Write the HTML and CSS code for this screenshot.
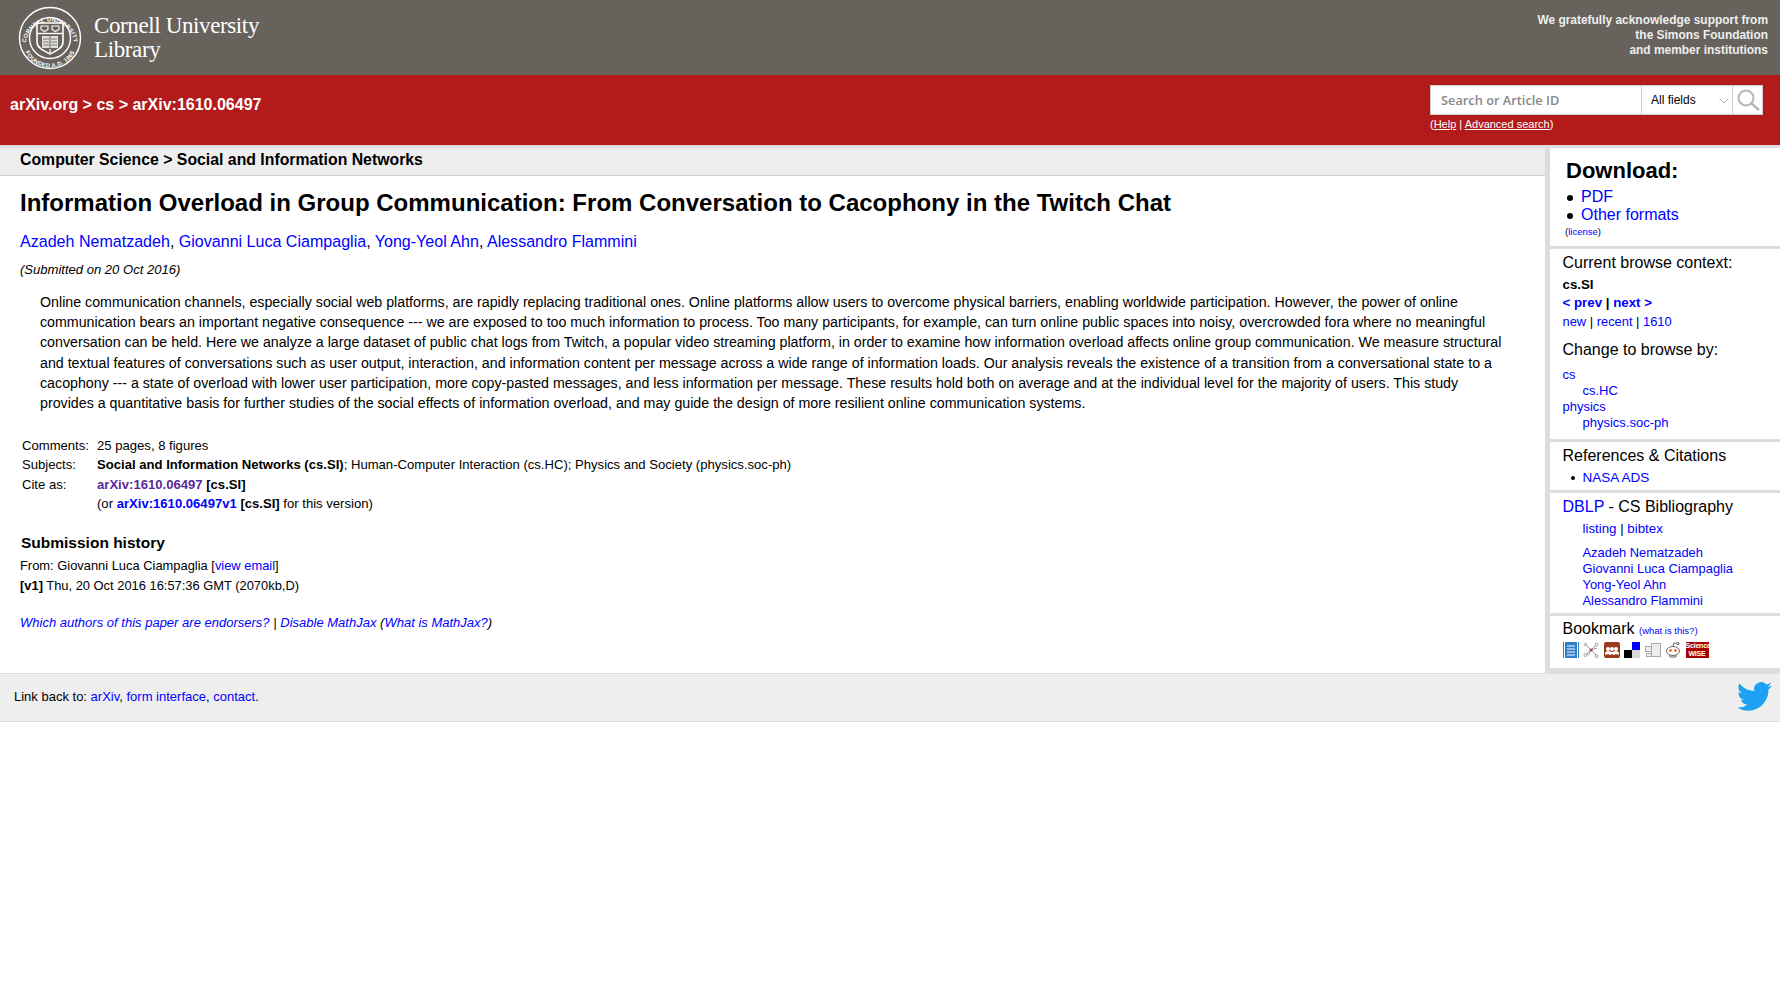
FILE: index.html
```html
<!DOCTYPE html>
<html lang="en">
<head>
<meta charset="utf-8">
<title>[1610.06497] Information Overload in Group Communication</title>
<link rel="stylesheet" href="styles.css">
</head>
<body>
<header class="cu-bar">
  <div class="cu-brand">
    <svg class="crest" viewBox="0 0 64 64" width="64" height="64" aria-hidden="true">
      <circle cx="32" cy="32" r="30.5" fill="none" stroke="#fff" stroke-width="1.400"/>
      <circle cx="32" cy="32" r="20.500" fill="none" stroke="#fff" stroke-width="1.400"/>
      <defs>
        <path id="arcTop" d="M8 36A24.300 24.300 0 0 1 56 36"/>
        <path id="arcBot" d="M4.500 34A27.500 27.500 0 0 0 59.500 34"/>
      </defs>
      <text class="crest-text"><textPath href="#arcTop" startOffset="50%" text-anchor="middle">CORNELL UNIVERSITY</textPath></text>
      <text class="crest-text"><textPath href="#arcBot" startOffset="50%" text-anchor="middle">FOUNDED A.D. 1865</textPath></text>
      <path d="M19 17h26v19c0 6-7 9-13 12-6-3-13-6-13-12z" fill="none" stroke="#fff" stroke-width="1.600"/>
      <path d="M19 27.500h26" stroke="#fff" stroke-width="1.400"/>
      <path d="M23 20h7v3.500l-3.500 2-3.500-2zM34 20h7v3.500l-3.500 2-3.500-2z" fill="none" stroke="#fff" stroke-width="1.100"/>
      <path d="M24 30h7.500v12h-7.500zM32.500 30h7.500v12h-7.500z" fill="#fff" opacity=".8"/>
      <path d="M25 33h6M25 36h6M25 39h6M33 33h6M33 36h6M33 39h6" stroke="#67635c" stroke-width=".8"/>
      <path d="M32 43v4" stroke="#fff" stroke-width="1.200"/>
    </svg>
    <div class="cu-name"><span>Cornell University</span><span>Library</span></div>
  </div>
  <div class="support">We gratefully acknowledge support from<br>the Simons Foundation<br>and member institutions</div>
</header>

<div class="red-bar">
  <div class="crumbs"><a>arXiv.org</a> &gt; <a>cs</a> &gt; <a>arXiv:1610.06497</a></div>
  <div class="search">
    <div class="search-row">
      <div class="search-input">Search or Article ID</div>
      <div class="search-select">All fields
        <svg class="chev" viewBox="0 0 10 6" width="10" height="6" aria-hidden="true"><path d="M.5.500 5 5 9.500.500" fill="none" stroke="#aaa" stroke-width="1"/></svg>
      </div>
      <div class="search-btn">
        <svg viewBox="0 0 24 24" width="24" height="24" aria-hidden="true"><circle cx="10" cy="10" r="7.500" fill="none" stroke="#b5b5b5" stroke-width="2"/><path d="M15.500 15.500 23 22" stroke="#b5b5b5" stroke-width="2.500"/></svg>
      </div>
    </div>
    <div class="search-help">(<a>Help</a> | <a>Advanced search</a>)</div>
  </div>
</div>

<div class="content">
  <main class="main">
    <div class="subject-bar">Computer Science &gt; Social and Information Networks</div>
    <div class="paper">
      <h1 class="title">Information Overload in Group Communication: From Conversation to Cacophony in the Twitch Chat</h1>
      <div class="authors"><a>Azadeh Nematzadeh</a>, <a>Giovanni Luca Ciampaglia</a>, <a>Yong-Yeol Ahn</a>, <a>Alessandro Flammini</a></div>
      <div class="dateline">(Submitted on 20 Oct 2016)</div>
      <p class="abstract">Online communication channels, especially social web platforms, are rapidly replacing traditional ones. Online platforms allow users to overcome physical barriers, enabling worldwide participation. However, the power of online communication bears an important negative consequence --- we are exposed to too much information to process. Too many participants, for example, can turn online public spaces into noisy, overcrowded fora where no meaningful conversation can be held. Here we analyze a large dataset of public chat logs from Twitch, a popular video streaming platform, in order to examine how information overload affects online group communication. We measure structural and textual features of conversations such as user output, interaction, and information content per message across a wide range of information loads. Our analysis reveals the existence of a transition from a conversational state to a cacophony --- a state of overload with lower user participation, more copy-pasted messages, and less information per message. These results hold both on average and at the individual level for the majority of users. This study provides a quantitative basis for further studies of the social effects of information overload, and may guide the design of more resilient online communication systems.</p>
      <div class="meta">
        <div class="meta-label">Comments:</div><div>25 pages, 8 figures</div>
        <div class="meta-label">Subjects:</div><div><b>Social and Information Networks (cs.SI)</b>; Human-Computer Interaction (cs.HC); Physics and Society (physics.soc-ph)</div>
        <div class="meta-label">Cite as:</div><div><a class="visited"><b>arXiv:1610.06497</b></a> <b>[cs.SI]</b></div>
        <div></div><div>(or <a><b>arXiv:1610.06497v1</b></a> <b>[cs.SI]</b> for this version)</div>
      </div>
      <h2 class="history-title">Submission history</h2>
      <div class="history">From: Giovanni Luca Ciampaglia [<a>view email</a>]<br><b>[v1]</b> Thu, 20 Oct 2016 16:57:36 GMT (2070kb,D)</div>
      <div class="endorsers"><a>Which authors of this paper are endorsers?</a> | <a>Disable MathJax</a> (<a>What is MathJax?</a>)</div>
    </div>
  </main>

  <aside class="side">
    <section class="box box-dl">
      <h2 class="dl-title">Download:</h2>
      <ul class="dl-list"><li><a>PDF</a></li><li><a>Other formats</a></li></ul>
      <div class="license">(<a>license</a>)</div>
    </section>
    <section class="box box-ctx">
      <h3 class="box-title">Current browse context:</h3>
      <div class="ctx-line ctx-bold">cs.SI</div>
      <div class="ctx-line ctx-bold"><a>&lt; prev</a> | <a>next &gt;</a></div>
      <div class="ctx-line ctx-plain"><a>new</a> | <a>recent</a> | <a>1610</a></div>
      <h3 class="box-title change">Change to browse by:</h3>
      <div class="browse"><a>cs</a><a class="ind">cs.HC</a><a>physics</a><a class="ind">physics.soc-ph</a></div>
    </section>
    <section class="box box-ref">
      <h3 class="box-title">References &amp; Citations</h3>
      <ul class="ref-list"><li><a>NASA ADS</a></li></ul>
    </section>
    <section class="box box-dblp">
      <h3 class="box-title"><a>DBLP</a> - CS Bibliography</h3>
      <div class="dblp-links"><a>listing</a> | <a>bibtex</a></div>
      <div class="browse dblp-authors"><a>Azadeh Nematzadeh</a><a>Giovanni Luca Ciampaglia</a><a>Yong-Yeol Ahn</a><a>Alessandro Flammini</a></div>
    </section>
    <section class="box box-bm">
      <h3 class="box-title">Bookmark <a class="what">(what is this?)</a></h3>
      <div class="bm-icons">
        <svg viewBox="0 0 16 16" width="16" height="16" aria-hidden="true"><path fill="#2f7fc9" d="M0 0h1v16H0zM15 0h1v16h-1zM2 0h12v16H2z"/><path stroke="#fff" stroke-width="1.200" d="M4 4h8M4 7h8M4 10h8M4 13h8"/></svg>
        <svg viewBox="0 0 16 16" width="16" height="16" aria-hidden="true"><path stroke="#999" fill="none" d="M2 2l12 12M14 2 2 14M8 8l6-2"/><circle cx="8" cy="8" r="1.500" fill="#b03060"/><g fill="#fff" stroke="#888" stroke-width=".8"><circle cx="2.500" cy="13" r="1.500"/><circle cx="5.500" cy="11.500" r="1.200"/><circle cx="13.500" cy="2.500" r="1.500"/><circle cx="13.500" cy="14" r="1.500"/><circle cx="2.500" cy="2.500" r="1.200"/></g></svg>
        <svg viewBox="0 0 16 16" width="16" height="16" aria-hidden="true"><rect width="16" height="16" rx="2" fill="#9c3a1c"/><g fill="#fff"><circle cx="4" cy="7" r="2"/><circle cx="8" cy="7" r="2"/><circle cx="12" cy="7" r="2"/><path d="M1 13c0-3 1-4 3-4s2 1 4 1 2-1 4-1 3 1 3 4l-3-1-2 1-2-1-2 1-2-1z"/></g></svg>
        <svg viewBox="0 0 16 16" width="16" height="16" aria-hidden="true"><path fill="#00f" d="M8 0h8v8H8z"/><path fill="#000" d="M0 8h8v8H0z"/><path fill="#d8d8d8" d="M8 8h8v8H8z"/></svg>
        <svg viewBox="0 0 16 16" width="16" height="16" aria-hidden="true"><g fill="#eee" stroke="#aaa"><rect x="6.500" y="1.500" width="9" height="13"/><rect x=".5" y="4.500" width="6" height="5"/><rect x="1.500" y="11.500" width="5" height="3"/></g></svg>
        <svg viewBox="0 0 16 16" width="16" height="16" aria-hidden="true"><ellipse cx="8" cy="9" rx="6.500" ry="4.500" fill="#fff" stroke="#666"/><circle cx="5.500" cy="8.500" r="1.300" fill="#f40"/><circle cx="10.500" cy="8.500" r="1.300" fill="#f40"/><path d="M8 4 9 1l3 .5M5 13v2h6v-2" fill="none" stroke="#666"/><circle cx="13" cy="1.500" r="1.200" fill="#fff" stroke="#666"/></svg>
        <span class="sciwise">Science<br>WISE</span>
      </div>
    </section>
  </aside>
</div>

<footer class="foot">
  <div>Link back to: <a>arXiv</a>, <a>form interface</a>, <a>contact</a>.</div>
  <svg class="bird" viewBox="0 0 24 24" width="35" height="35" aria-hidden="true"><path fill="#1da1f2" d="M23.953 4.57a10 10 0 01-2.825.775 4.958 4.958 0 002.163-2.723c-.951.555-2.005.959-3.127 1.184a4.92 4.92 0 00-8.384 4.482C7.69 8.095 4.067 6.13 1.64 3.162a4.822 4.822 0 00-.666 2.475c0 1.71.87 3.213 2.188 4.096a4.904 4.904 0 01-2.228-.616v.06a4.923 4.923 0 003.946 4.827 4.996 4.996 0 01-2.212.085 4.936 4.936 0 004.604 3.417 9.867 9.867 0 01-6.102 2.105c-.39 0-.779-.023-1.17-.067a13.995 13.995 0 007.557 2.209c9.053 0 13.998-7.496 13.998-13.985 0-.21 0-.42-.015-.63A9.935 9.935 0 0024 4.59z"/></svg>
</footer>
</body>
</html>
```

FILE: styles.css
```css
* { box-sizing: border-box; }
html, body { margin: 0; padding: 0; background: #fff; }
body { font-family: "Liberation Sans", Arial, sans-serif; font-size: 13px; color: #000; }
a { color: #00f; }
h1, h2, h3, p, ul { margin: 0; padding: 0; font-weight: normal; }

.cu-bar { height: 75px; background: #67635c; display: flex; justify-content: space-between; align-items: flex-start; padding: 0 12px 0 18px; color: #fff; }
.cu-brand { display: flex; align-items: center; gap: 12px; height: 75px; }
.crest { flex: none; }
.crest-text { font-family: "Liberation Sans", sans-serif; font-size: 5.800px; font-weight: bold; fill: #fff; letter-spacing: .3px; }
.cu-name { font-family: "Liberation Serif", serif; font-size: 23px; line-height: 24px; letter-spacing: -.38px; display: flex; flex-direction: column; color: #fff; }
.support { font-weight: bold; font-size: 11.950px; line-height: 15px; text-align: right; padding-top: 13px; color: #eee; }

.red-bar { height: 70px; background: #b31b1b; display: flex; justify-content: space-between; padding: 0 17px 0 10px; color: #fff; }
.crumbs { font-weight: bold; font-size: 16px; line-height: 18px; padding-top: 21px; }
.crumbs a { color: #fff; }
.search { width: 333px; padding-top: 10px; }
.search-row { display: flex; height: 30px; background: #fff; border: 1px solid #ccc; }
.search-input { width: 211px; flex: none; border-right: 1px solid #ccc; padding-left: 10px; font-family: "Open Sans", sans-serif; font-weight: 600; font-size: 12.800px; line-height: 29px; color: #888; }
.search-select { width: 91px; flex: none; border-right: 1px solid #ccc; padding-left: 9px; line-height: 29px; font-size: 12px; position: relative; color: #000; }
.chev { position: absolute; right: 3px; top: 12px; }
.search-btn { flex: 1; display: flex; align-items: center; justify-content: center; }
.search-help { font-size: 11px; line-height: 13px; margin-top: 3px; color: #fff; }
.search-help a { color: #fff; text-decoration: underline; }

.content { display: flex; align-items: stretch; border-top: 3px solid #ddd; }
.main { flex: 1; min-width: 0; }
.subject-bar { height: 28px; background: #eee; border-bottom: 1px solid #ccc; padding-left: 20px; font-weight: bold; font-size: 15.820px; line-height: 23px; }
.paper { padding: 0 40px 0 20px; }
.title { font-weight: bold; font-size: 24.020px; line-height: 28px; margin-top: 13px; }
.authors { font-size: 16.060px; line-height: 20px; margin-top: 14px; }
.dateline { font-style: italic; font-size: 13.050px; line-height: 16px; margin-top: 11px; }
.abstract { font-size: 14.220px; line-height: 20.200px; margin: 14px 0 0 20px; }
.meta { display: grid; grid-template-columns: 75px 1fr; grid-auto-rows: 19.500px; line-height: 19.500px; font-size: 13.100px; margin: 22.300px 0 0 2px; }
.visited { color: #5a2a9a; }
.history-title { font-weight: bold; font-size: 15.500px; line-height: 20px; margin: 19.500px 0 0 1px; }
.history { font-size: 12.900px; line-height: 20px; margin-top: 3px; }
.endorsers { font-style: italic; font-size: 13.030px; line-height: 20px; margin-top: 17px; }

.side { width: 235px; flex: none; background: #ddd; padding-left: 5px; display: flex; flex-direction: column; gap: 3px; padding-bottom: 5px; }
.box { background: #fff; padding-left: 12.500px; }
.box-title { font-size: 16px; line-height: 18px; }
.box-dl { height: 98px; padding-top: 10px; padding-left: 15px; }
.dl-title { font-weight: bold; font-size: 22px; line-height: 26px; padding-left: 1px; }
.dl-list { list-style: none; font-size: 16px; line-height: 18px; margin-top: 4px; }
.dl-list li { padding-left: 16px; position: relative; }
.dl-list li::before { content: ""; position: absolute; left: 2px; top: 7px; width: 6px; height: 6px; border-radius: 50%; background: #000; }
.license { font-size: 9.500px; line-height: 12px; margin-top: 2px; }
.box-ctx { height: 190px; padding-top: 5px; }
.ctx-line { font-size: 12.900px; line-height: 18px; }
.box-ctx .box-title { margin-bottom: 4px; }
.ctx-bold { font-weight: bold; font-size: 13.300px; }
.ctx-plain { margin-top: 1px; }
.box-ctx .change { margin: 10px 0 8px; }
.browse a { display: block; font-size: 13px; line-height: 16px; }
.browse a.ind { padding-left: 20px; }
.box-ref { height: 48px; padding-top: 5px; }
.ref-list { list-style: none; font-size: 13.500px; line-height: 18px; margin-top: 4px; padding-left: 20px; position: relative; }
.ref-list::before { content: ""; position: absolute; left: 8px; top: 7px; width: 4px; height: 4px; border-radius: 50%; background: #000; }
.box-dblp { height: 120px; padding-top: 5px; }
.dblp-links { font-size: 13.300px; line-height: 18px; padding-left: 20px; margin-top: 4px; }
.dblp-authors { padding-left: 20px; margin-top: 7px; }
.dblp-authors a { font-size: 12.900px; }
.box-bm { height: 52px; padding-top: 4px; }
.what { font-size: 9.500px; }
.bm-icons { display: flex; gap: 4.500px; margin-top: 2px; align-items: center; }
.sciwise { width: 23px; height: 16px; background: #a80000; color: #fff; font-size: 7px; font-weight: bold; line-height: 8px; text-align: center; white-space: nowrap; letter-spacing: -.2px; }

.foot { height: 49px; background: #eee; border-top: 1px solid #ddd; border-bottom: 1px solid #ddd; display: flex; justify-content: space-between; align-items: center; padding: 0 8px 2px 14px; font-size: 13px; }
```
